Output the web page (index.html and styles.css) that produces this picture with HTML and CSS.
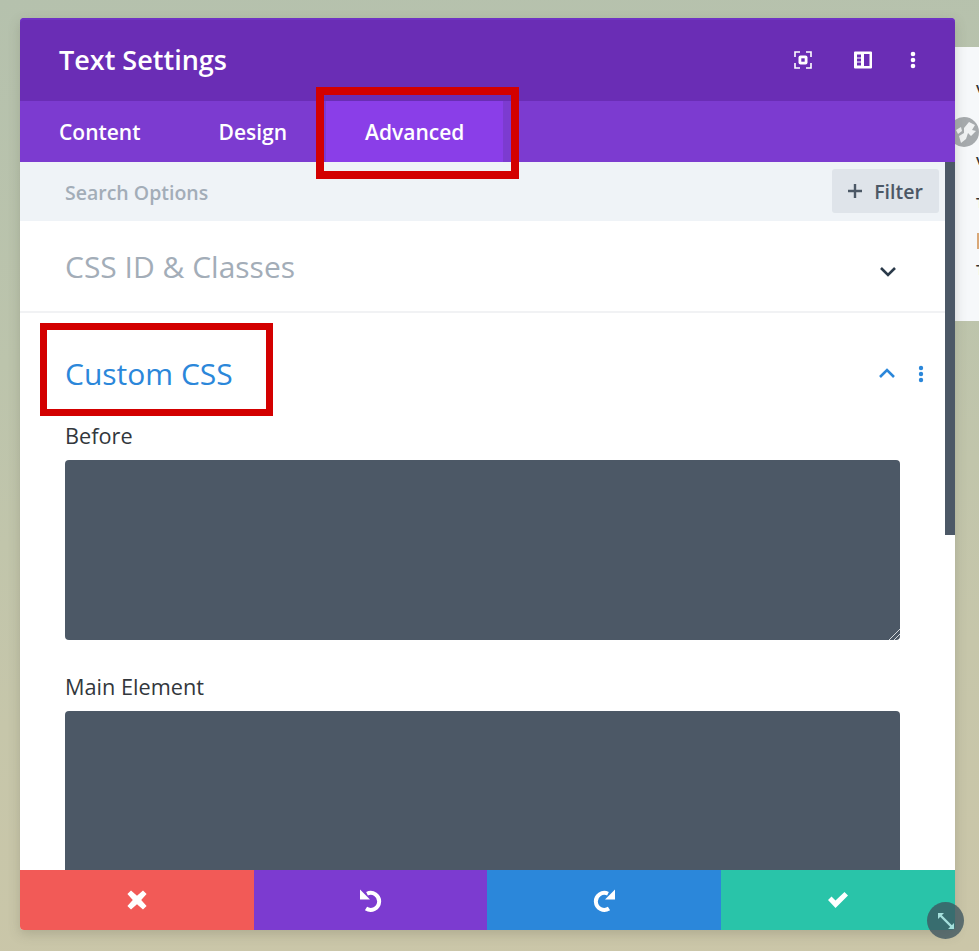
FILE: index.html
```html
<!DOCTYPE html>
<html lang="en">
<head>
<meta charset="utf-8">
<title>Text Settings</title>
<link rel="stylesheet" href="styles.css">
</head>
<body>
<aside class="behind">
  <span class="frag frag-a">v</span>
  <span class="frag frag-b">v</span>
  <span class="frag frag-c">T</span>
  <span class="frag frag-d"></span>
  <span class="frag frag-e">T</span>
  <svg class="globe" viewBox="0 0 30 30" aria-hidden="true"><circle cx="15" cy="15" r="15" fill="#a6aaad"/><path d="M15 11l5-6 6 3-3 5 4 1-5 5-3-3-2 6-5 4-2-7 5-3zM7 13l5-3 1 4-4 3z" fill="#f0f2f3"/></svg>
</aside>
<main class="modal">
  <header class="head">
    <h1 class="title">Text Settings</h1>
    <div class="head-icons">
      <svg class="hicon" viewBox="0 0 18 18" aria-hidden="true"><path d="M1 6V1h5M12 1h5v5M17 12v5h-5M6 17H1v-5" fill="none" stroke="#fff" stroke-width="1.6"/><rect x="4.500" y="4.500" width="9" height="9" rx="2" fill="#fff"/><rect x="7.300" y="7.300" width="3.400" height="3.400" fill="#6a2db5"/></svg>
      <svg class="hicon" viewBox="0 0 18 18" aria-hidden="true"><path d="M0 1.500A1 1 0 0 1 1 .5h16a1 1 0 0 1 1 1v15a1 1 0 0 1-1 1H1a1 1 0 0 1-1-1z" fill="#fff"/><path d="M10 3h5.500v12H10z" fill="#6a2db5"/><path d="M3 3.500h4v3H3zM3 7.500h4v3H3zM3 11.500h4v3H3z" fill="#6a2db5"/></svg>
      <svg class="hicon kebab" viewBox="0 0 6 18" aria-hidden="true"><circle cx="3" cy="3" r="2.300" fill="#fff"/><circle cx="3" cy="9" r="2.300" fill="#fff"/><circle cx="3" cy="15" r="2.300" fill="#fff"/></svg>
    </div>
  </header>
  <nav class="tabs">
    <a class="tab">Content</a>
    <a class="tab">Design</a>
    <a class="tab tab-active">Advanced<span class="mark mark-tab"></span></a>
  </nav>
  <div class="panel">
    <div class="search">
      <span class="search-ph">Search Options</span>
      <button class="filter"><svg class="plus" viewBox="0 0 14 14" aria-hidden="true"><path d="M7 0v14M0 7h14" stroke="#4c5866" stroke-width="2.400"/></svg>Filter</button>
    </div>
    <div class="scroll">
      <section class="group-closed">
        <h2 class="group-title">CSS ID &amp; Classes</h2>
        <svg class="chev" viewBox="0 0 18 11" aria-hidden="true"><path d="M2 2l7 7 7-7" fill="none" stroke="#2b3a4a" stroke-width="2.600"/></svg>
      </section>
      <section class="group-open">
        <div class="open-head">
          <h2 class="group-title title-blue">Custom CSS<span class="mark mark-css"></span></h2>
          <svg class="chev" viewBox="0 0 18 11" aria-hidden="true"><path d="M2 9l7-7 7 7" fill="none" stroke="#2b87da" stroke-width="2.600"/></svg>
          <svg class="kebab-blue" viewBox="0 0 6 18" aria-hidden="true"><circle cx="3" cy="3" r="2.200" fill="#2b87da"/><circle cx="3" cy="9" r="2.200" fill="#2b87da"/><circle cx="3" cy="15" r="2.200" fill="#2b87da"/></svg>
        </div>
        <label class="field-label">Before</label>
        <div class="area">
          <svg class="grip" viewBox="0 0 12 12" aria-hidden="true"><path d="M1 12L12 1M6 12l6-6" stroke="#d5dade" stroke-width="1"/></svg>
        </div>
        <label class="field-label label-next">Main Element</label>
        <div class="area area-cut"></div>
      </section>
    </div>
    <div class="scrollbar"></div>
  </div>
  <footer class="foot">
    <button class="act act-red"><svg class="act-icon" viewBox="0 0 20 20" aria-hidden="true"><path d="M5 2l5 4.500L15 2l3 3-4.500 5 4.500 5-3 3-5-4.500L5 18l-3-3 4.500-5L2 5z" fill="#fff"/></svg></button>
    <button class="act act-purple"><svg class="act-icon" viewBox="0 0 24 24" aria-hidden="true"><path d="M8 5.700A8.500 8.500 0 1 1 7 20.500" fill="none" stroke="#fff" stroke-width="4"/><path d="M1 1.500v10h10z" fill="#fff"/></svg></button>
    <button class="act act-blue"><svg class="act-icon" viewBox="0 0 24 24" aria-hidden="true"><path d="M16 5.700A8.500 8.500 0 1 0 17 20.500" fill="none" stroke="#fff" stroke-width="4"/><path d="M23 1.500v10H13z" fill="#fff"/></svg></button>
    <button class="act act-green"><svg class="act-icon" viewBox="0 0 24 20" aria-hidden="true"><path d="M2 10l3.500-3.500L9.500 10.500 18.500 2 22 5.500 9.500 18z" fill="#fff"/></svg></button>
  </footer>
  <span class="resize"><svg viewBox="0 0 20 20" aria-hidden="true"><path d="M4 4l12 12" stroke="#a5e0dc" stroke-width="2.400"/><path d="M2 2h6L2 8zM18 18h-6l6-6z" fill="#a5e0dc"/></svg></span>
</main>
</body>
</html>
```

FILE: styles.css
```css
* { box-sizing: border-box; }
body {
  margin: 0;
  height: 951px;
  overflow: hidden;
  position: relative;
  font-family: "Open Sans", "Noto Sans", sans-serif;
  background: linear-gradient(175deg, #b5c1ad 0%, #bcc4ac 35%, #c6c6aa 70%, #cbc6a8 100%);
  padding: 18px 0 0 20px;
}
.behind {
  position: absolute;
  left: 955px;
  top: 47px;
  width: 24px;
  height: 274px;
  background: #f6f8fa;
  color: #333;
  font-size: 15px;
  overflow: hidden;
}
.frag { position: absolute; left: 21px; line-height: 16px; font-weight: 600; }
.frag-a { top: 32px; }
.frag-b { top: 104px; }
.frag-c { top: 147px; }
.frag-d { top: 186px; left: 22px; width: 2px; height: 16px; background: #d9a878; }
.frag-e { top: 214px; }
.globe { position: absolute; left: -6px; top: 70px; width: 30px; height: 30px; }
.modal {
  position: relative;
  width: 935px;
  height: 912px;
  display: flex;
  flex-direction: column;
  background: #fff;
  border-radius: 4px;
  box-shadow: 0 4px 12px rgba(90, 90, 70, 0.25);
}
.head {
  flex: 0 0 83px;
  display: flex;
  align-items: center;
  justify-content: space-between;
  padding: 0 39px;
  background: #6a2db5;
  border-radius: 4px 4px 0 0;
  box-shadow: inset 0 2px 0 #6f32c4;
}
.title { margin: 0; color: #fff; font-size: 27px; font-weight: 600; line-height: 1; }
.head-icons { display: flex; align-items: center; gap: 42px; }
.hicon { width: 18px; height: 18px; display: block; }
.kebab { width: 6px; margin-left: -4px; }
.tabs {
  flex: 0 0 61px;
  display: flex;
  background: #7c3bd0;
}
.tab {
  display: flex;
  align-items: center;
  color: #fff;
  font-size: 21px;
  font-weight: 600;
  padding: 0 39px;
  position: relative;
}
.tab-active { background: #8a3ee8; }
.mark { position: absolute; z-index: 2; border-style: solid; border-color: #d30000; pointer-events: none; }
.mark-tab { left: -10px; top: -14px; width: 203px; height: 92px; border-width: 8px; }
.panel { flex: 1 1 0; min-height: 0; display: flex; flex-direction: column; position: relative; }
.search {
  flex: 0 0 59px;
  display: flex;
  align-items: center;
  justify-content: space-between;
  margin-right: 10px;
  padding: 0 6px 0 45px;
  background: #eff3f7;
}
.search-ph { margin-top: 2px; font-size: 19.500px; font-weight: 600; color: #a3adb8; }
.filter {
  width: 107px;
  height: 44px;
  margin-top: -1px;
  border: 0;
  border-radius: 3px;
  background: #dfe4ea;
  color: #4c5866;
  font: 600 19.500px "Open Sans", sans-serif;
  display: flex;
  align-items: center;
  justify-content: center;
  gap: 12px;
  padding: 0;
}
.plus { width: 14px; height: 14px; display: block; }
.scroll { flex: 1 1 0; min-height: 0; overflow: hidden; }
.scrollbar { position: absolute; right: 0; top: 0; width: 10px; height: 373px; background: #4c5866; }
.group-closed {
  display: flex;
  align-items: center;
  justify-content: space-between;
  height: 92px;
  padding: 0 58px 0 45px;
  border-bottom: 2px solid #f1f2f4;
}
.group-title { margin: 2px 0 0; font-size: 30px; font-weight: 400; line-height: 1; color: #a3adb8; }
.title-blue { color: #2b87da; position: relative; flex: 1; }
.chev { width: 18px; height: 11px; display: block; }
.group-closed .chev { margin-top: 11px; }
.open-head { display: flex; align-items: center; height: 60px; margin-top: 30px; padding: 0 31px 0 45px; gap: 22px; }
.mark-css { left: -25px; top: -36px; width: 233px; height: 93px; border-width: 7px; }
.kebab-blue { width: 6px; height: 18px; display: block; margin-top: 2px; }
.field-label { display: block; margin: 18px 0 0 45px; font-size: 21.700px; font-weight: 400; line-height: 30px; color: #32373c; height: 39px; }
.label-next { margin-top: 32px; }
.area { position: relative; width: 835px; height: 180px; margin-left: 45px; background: #4c5866; border-radius: 4px; }
.area-cut { height: 170px; border-radius: 4px 4px 0 0; }
.grip { position: absolute; right: 0; bottom: 0; width: 12px; height: 12px; }
.foot { flex: 0 0 60px; display: grid; grid-template-columns: 234px 233px 234px 234px; border-radius: 0 0 4px 4px; overflow: hidden; position: relative; }
.act { border: 0; padding: 0; display: flex; align-items: center; justify-content: center; }
.act-red { background: #f25a57; }
.act-purple { background: #7c3bd0; }
.act-blue { background: #2b87da; }
.act-green { background: #29c4a9; }
.act-icon { width: 24px; height: 24px; display: block; }
.resize {
  position: absolute;
  right: -9px;
  bottom: -9px;
  width: 37px;
  height: 37px;
  border-radius: 50%;
  background: rgba(60, 85, 95, 0.78);
  display: flex;
  align-items: center;
  justify-content: center;
}
.resize svg { width: 20px; height: 20px; }
```
